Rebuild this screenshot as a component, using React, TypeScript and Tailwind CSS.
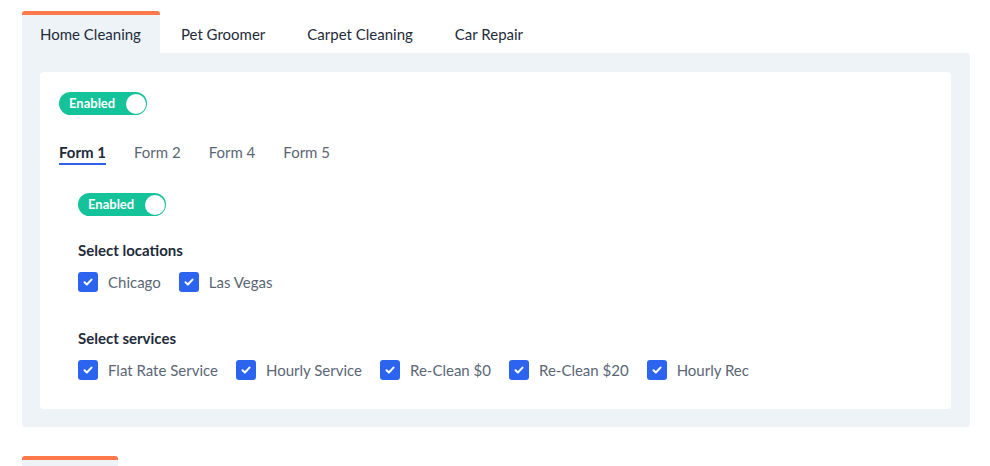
import React from "react";

const Toggle = () => (
  <div className="flex h-[23px] w-[88px] items-center justify-between rounded-full bg-[#14c39a] pl-[10px] pr-[1.5px]">
    <span className="text-[13px] font-bold leading-none text-white">Enabled</span>
    <span className="h-[20px] w-[20px] rounded-full bg-white" />
  </div>
);

const Check = ({ label }: { label: string }) => (
  <div className="flex items-center gap-[10px]">
    <span className="flex h-[20px] w-[20px] items-center justify-center rounded-[3px] bg-[#2d64ef]">
      <svg width="12" height="12" viewBox="0 0 12 12" fill="none">
        <path d="M2.5 6.2L4.9 8.5L9.5 3.6" stroke="white" strokeWidth="2" strokeLinecap="round" strokeLinejoin="round" />
      </svg>
    </span>
    <span className="text-[15px] leading-[20px] text-[#5b6675]">{label}</span>
  </div>
);

export default function App() {
  const tabs = ["Home Cleaning", "Pet Groomer", "Carpet Cleaning", "Car Repair"];
  const forms = ["Form 1", "Form 2", "Form 4", "Form 5"];
  return (
    <div className="h-[466px] w-[990px] overflow-hidden bg-white pt-[11px] font-['Lato',sans-serif] text-[#1e2b3a]">
      <div className="ml-[22px] w-[948px]">
        <div className="flex h-[42px]">
          {tabs.map((t, i) => (
            <div
              key={t}
              className={
                i === 0
                  ? "flex items-center rounded-t-[3px] border-t-4 border-[#ff7849] bg-[#eef3f8] pl-[18px] pr-[19px] text-[15px] text-[#1e2b3a]"
                  : "flex items-center border-t-4 border-transparent px-[21px] text-[15px] text-[#1e2b3a]"
              }
            >
              {t}
            </div>
          ))}
        </div>
        <div className="rounded-b-[4px] rounded-tr-[4px] bg-[#eef3f8] pb-[18px] pl-[18px] pr-[19px] pt-[19px]">
          <div className="h-[337px] rounded-[4px] bg-white pl-[19px] pt-[20px]">
            <Toggle />
            <div className="mt-[27px] flex gap-[28px]">
              {forms.map((f, i) => (
                <div
                  key={f}
                  className={
                    i === 0
                      ? "border-b-[2px] border-[#2f62e8] pb-[1px] text-[15px] font-bold leading-[20px] text-[#1e2b3a]"
                      : "border-b-[2px] border-transparent pb-[1px] text-[15px] leading-[20px] text-[#5b6675]"
                  }
                >
                  {f}
                </div>
              ))}
            </div>
            <div className="ml-[19px] mt-[28px]">
              <Toggle />
              <div className="mt-[24px] text-[15px] font-bold leading-[20px] text-[#1e2b3a]">Select locations</div>
              <div className="mt-[12px] flex gap-[18px]">
                <Check label="Chicago" />
                <Check label="Las Vegas" />
              </div>
              <div className="mt-[36px] text-[15px] font-bold leading-[20px] text-[#1e2b3a]">Select services</div>
              <div className="mt-[12px] flex gap-[18px]">
                <Check label="Flat Rate Service" />
                <Check label="Hourly Service" />
                <Check label="Re-Clean $0" />
                <Check label="Re-Clean $20" />
                <Check label="Hourly Rec" />
              </div>
            </div>
          </div>
        </div>
        <div className="mt-[29px] h-[12px] w-[96px] rounded-t-[3px] border-t-4 border-[#ff7849] bg-[#eef3f8]" />
      </div>
    </div>
  );
}
